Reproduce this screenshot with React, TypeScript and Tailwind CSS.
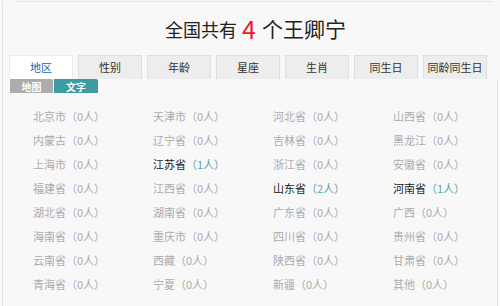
const tabs = ["地区", "性别", "年龄", "星座", "生肖", "同生日", "同龄同生日"];

const regions: [string, number][] = [
  ["北京市", 0], ["天津市", 0], ["河北省", 0], ["山西省", 0],
  ["内蒙古", 0], ["辽宁省", 0], ["吉林省", 0], ["黑龙江", 0],
  ["上海市", 0], ["江苏省", 1], ["浙江省", 0], ["安徽省", 0],
  ["福建省", 0], ["江西省", 0], ["山东省", 2], ["河南省", 1],
  ["湖北省", 0], ["湖南省", 0], ["广东省", 0], ["广西", 0],
  ["海南省", 0], ["重庆市", 0], ["四川省", 0], ["贵州省", 0],
  ["云南省", 0], ["西藏", 0], ["陕西省", 0], ["甘肃省", 0],
  ["青海省", 0], ["宁夏", 0], ["新疆", 0], ["其他", 0],
];

const App = () => {
  return (
    <div
      className="w-[500px] h-[306px] overflow-hidden bg-[#f8f8f8]"
      style={{ fontFamily: '"Noto Sans CJK SC", "Noto Sans", sans-serif' }}
    >
      <div className="ml-[2px] h-full border-l border-[#e4e4e4]">
        <div className="h-px bg-[#e6e6e6] ml-[12px] mr-[8px] mt-[1px]" />

        <div className="h-[53px] flex items-center justify-center text-[#222] leading-none pl-[8px]">
          <span className="text-[18px]">全国共有</span>
          <span className="text-[25px] text-[#e8202a] ml-[5px] mr-[6px]">4</span>
          <span className="text-[21px]">个王卿宁</span>
        </div>

        <div className="flex gap-[5px] pl-[6px]">
          {tabs.map((t, i) => (
            <div
              key={t}
              className={
                i === 0
                  ? "w-[64px] h-[24px] flex items-center justify-center text-[11px] bg-white text-[#1f5fb0] border-t border-x border-[#ececec]"
                  : "w-[64px] h-[24px] flex items-center justify-center text-[11px] bg-[#ededed] text-[#333] border-t border-x border-[#dedede]"
              }
            >
              {t}
            </div>
          ))}
        </div>

        <div className="mr-[2px] h-full border-r border-[#e2e2e2]">
          <div className="flex pl-[7px] gap-px">
            <div className="w-[43px] h-[14px] bg-[#acacac] text-white text-[10px] font-bold flex items-center justify-center rounded-tr-[2px]">
              地图
            </div>
            <div className="w-[44px] h-[14px] bg-[#3d9ba1] text-white text-[10px] font-bold flex items-center justify-center rounded-tr-[2px]">
              文字
            </div>
          </div>

          <div className="grid grid-cols-[120px_120px_120px_120px] pl-[30px] mt-[11px]">
            {regions.map(([name, n]) => (
              <div key={name} className="h-[24px] flex items-center text-[11px] whitespace-nowrap">
                {n > 0 ? (
                  <>
                    <span className="text-[#1a1a1a]">{name}</span>
                    <span className="text-[#5aa6a6]">（{n}人）</span>
                  </>
                ) : (
                  <span className="text-[#ababab]">
                    {name}（{n}人）
                  </span>
                )}
              </div>
            ))}
          </div>
        </div>
      </div>
    </div>
  );
};

export default App;
